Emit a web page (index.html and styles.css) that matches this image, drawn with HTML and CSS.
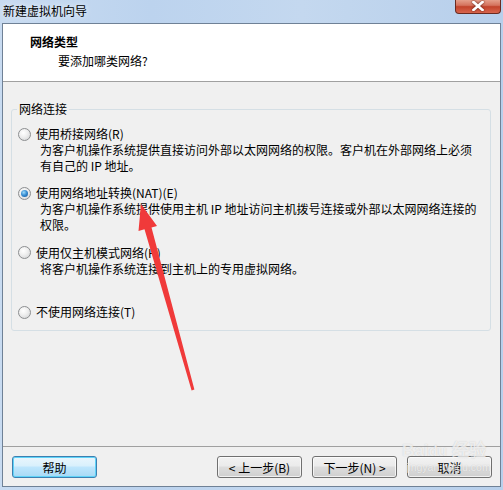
FILE: index.html
```html
<!DOCTYPE html>
<html lang="zh-CN">
<head>
<meta charset="utf-8">
<title>新建虚拟机向导</title>
<link rel="stylesheet" href="styles.css">
</head>
<body>
<div class="window">
  <div class="titlebar">
    <span class="title">新建虚拟机向导</span>
    <span class="close"><svg width="12" height="10" viewBox="0 0 12 10"><path d="M1.5 1 L10.5 9 M10.5 1 L1.5 9" stroke="#ffffff" stroke-width="2.6" stroke-linecap="square"/></svg></span>
  </div>
  <div class="client">
    <div class="header">
      <div class="h-title">网络类型</div>
      <div class="h-sub">要添加哪类网络?</div>
    </div>
    <div class="main">
      <fieldset class="group">
        <legend>网络连接</legend>
        <div class="options">
          <div class="option">
            <div class="opt-row"><span class="radio"></span><span>使用桥接网络(R)</span></div>
            <div class="desc">为客户机操作系统提供直接访问外部以太网网络的权限。客户机在外部网络上必须<br>有自己的 IP 地址。</div>
          </div>
          <div class="option">
            <div class="opt-row"><span class="radio checked"></span><span>使用网络地址转换(NAT)(E)</span></div>
            <div class="desc">为客户机操作系统提供使用主机 IP 地址访问主机拨号连接或外部以太网网络连接的<br>权限。</div>
          </div>
          <div class="option">
            <div class="opt-row"><span class="radio"></span><span>使用仅主机模式网络(H)</span></div>
            <div class="desc">将客户机操作系统连接到主机上的专用虚拟网络。</div>
          </div>
          <div class="option">
            <div class="opt-row"><span class="radio"></span><span>不使用网络连接(T)</span></div>
          </div>
        </div>
      </fieldset>
    </div>
    <div class="footer">
      <button class="btn btn-default">帮助</button>
      <div class="btn-group">
        <button class="btn">&lt; 上一步(B)</button>
        <button class="btn">下一步(N) &gt;</button>
        <button class="btn">取消</button>
      </div>
    </div>
  </div>
</div>
<svg class="arrow" width="503" height="490" viewBox="0 0 503 490">
  <polygon points="141,204 157,226 151.5,227.5 194.4,389.6 191.6,390.4 144.5,229.3 138.5,231" fill="#f03a3a"/>
</svg>
<div class="watermark">
  <div class="wm-logo">Bai<span class="wm-du">du</span> 经验</div>
  <div class="wm-url">jingyan.baidu.com</div>
</div>
</body>
</html>
```

FILE: styles.css
```css
* { box-sizing: border-box; }
html, body {
  margin: 0;
  padding: 0;
}
body {
  width: 503px;
  height: 490px;
  overflow: hidden;
  position: relative;
  background: linear-gradient(90deg, #c8dbf1 0%, #bcd3ee 30%, #c4d8ef 60%, #b7cfeb 100%);
  font-family: "Noto Sans CJK SC", "Noto Sans", sans-serif;
  font-size: 12px;
  color: #000;
}
.window {
  height: 490px;
  display: flex;
  flex-direction: column;
}
.titlebar {
  height: 23px;
  display: flex;
  align-items: flex-start;
  justify-content: space-between;
  padding: 0 2px 0 3px;
}
.title {
  margin-top: 2px;
  line-height: 18px;
  font-size: 12px;
  color: #000;
  text-shadow: 0 0 6px rgba(255,255,255,0.9);
}
.close {
  width: 46px;
  height: 15px;
  margin-top: -1px;
  border: 1px solid #6a2a20;
  border-top: none;
  border-radius: 0 0 4px 4px;
  background: linear-gradient(180deg, #e8a793 0%, #d5735e 45%, #c2432b 55%, #d8654d 100%);
  display: flex;
  align-items: center;
  justify-content: center;
}
.close svg {
  display: block;
  filter: drop-shadow(0 0 1px #5a1c12);
}
.client {
  flex: 1;
  margin: 0 2px 3px 2px;
  border: 1px solid #6f8196;
  background: #f0f0f0;
  display: flex;
  flex-direction: column;
}
.header {
  height: 58px;
  background: #fff;
  border-bottom: 1px solid #a0a0a0;
  padding: 10px 0 0 27px;
}
.h-title {
  font-weight: bold;
  line-height: 16px;
}
.h-sub {
  line-height: 16px;
  margin-top: 3px;
  padding-left: 28px;
}
.main {
  flex: 1;
  padding: 19px 9px 0 8px;
}
.group {
  margin: 0;
  padding: 0;
  border: 1px solid #d5dfe5;
  border-radius: 3px;
  height: 230px;
}
.group legend {
  margin-left: 5px;
  padding: 0 2px;
  line-height: 16px;
}
.options {
  padding-top: 9px;
  display: grid;
  grid-template-rows: repeat(4, 59.4px);
}
.opt-row {
  display: flex;
  align-items: center;
  height: 16px;
  line-height: 16px;
  padding-left: 6px;
}
.radio {
  width: 13px;
  height: 13px;
  border-radius: 50%;
  border: 1px solid #8c8e90;
  background: radial-gradient(circle at 40% 35%, #ffffff 0%, #f0f0f0 40%, #cfd0d2 100%);
  margin-right: 5px;
  position: relative;
  flex: none;
}
.radio.checked::after {
  content: "";
  position: absolute;
  left: 2px;
  top: 2px;
  width: 7px;
  height: 7px;
  border-radius: 50%;
  background: radial-gradient(circle at 40% 35%, #9fdcfa 0%, #3a8fd4 45%, #0c4f94 100%);
}
.desc {
  padding-left: 28px;
  line-height: 16px;
  white-space: nowrap;
}
.footer {
  height: 40px;
  border-top: 1px solid #a0a0a0;
  display: flex;
  justify-content: space-between;
  align-items: flex-start;
  padding: 9px 8px 0 9px;
}
.btn-group {
  display: flex;
  gap: 10px;
}
.btn {
  width: 85px;
  height: 22px;
  margin: 0;
  padding: 0;
  font-family: inherit;
  font-size: 12px;
  color: #000;
  border: 1px solid #707070;
  border-radius: 3px;
  background: linear-gradient(180deg, #f2f2f2 0%, #ebebeb 45%, #dddddd 50%, #cfcfcf 100%);
  box-shadow: inset 0 0 0 1px rgba(255,255,255,0.7);
}
.btn-default {
  border-color: #3c7fb1;
  background: linear-gradient(180deg, #eaf6fd 0%, #d9f0fc 45%, #bee6fd 50%, #a7d9f5 100%);
  box-shadow: inset 0 0 0 1px #5fd3f8;
}
.arrow {
  position: absolute;
  left: 0;
  top: 0;
  pointer-events: none;
}
.watermark {
  position: absolute;
  left: 402px;
  top: 441px;
  color: rgba(255,255,255,0.7);
  text-shadow: 0 0 1px rgba(140,140,140,0.45);
  pointer-events: none;
}
.wm-logo {
  font-family: "Liberation Sans", sans-serif;
  font-size: 17px;
  font-weight: bold;
  line-height: 19px;
}
.wm-du {
  font-size: 15px;
}
.wm-url {
  font-family: "Liberation Sans", sans-serif;
  font-size: 10.5px;
  margin-left: 4px;
  line-height: 14px;
}
```
